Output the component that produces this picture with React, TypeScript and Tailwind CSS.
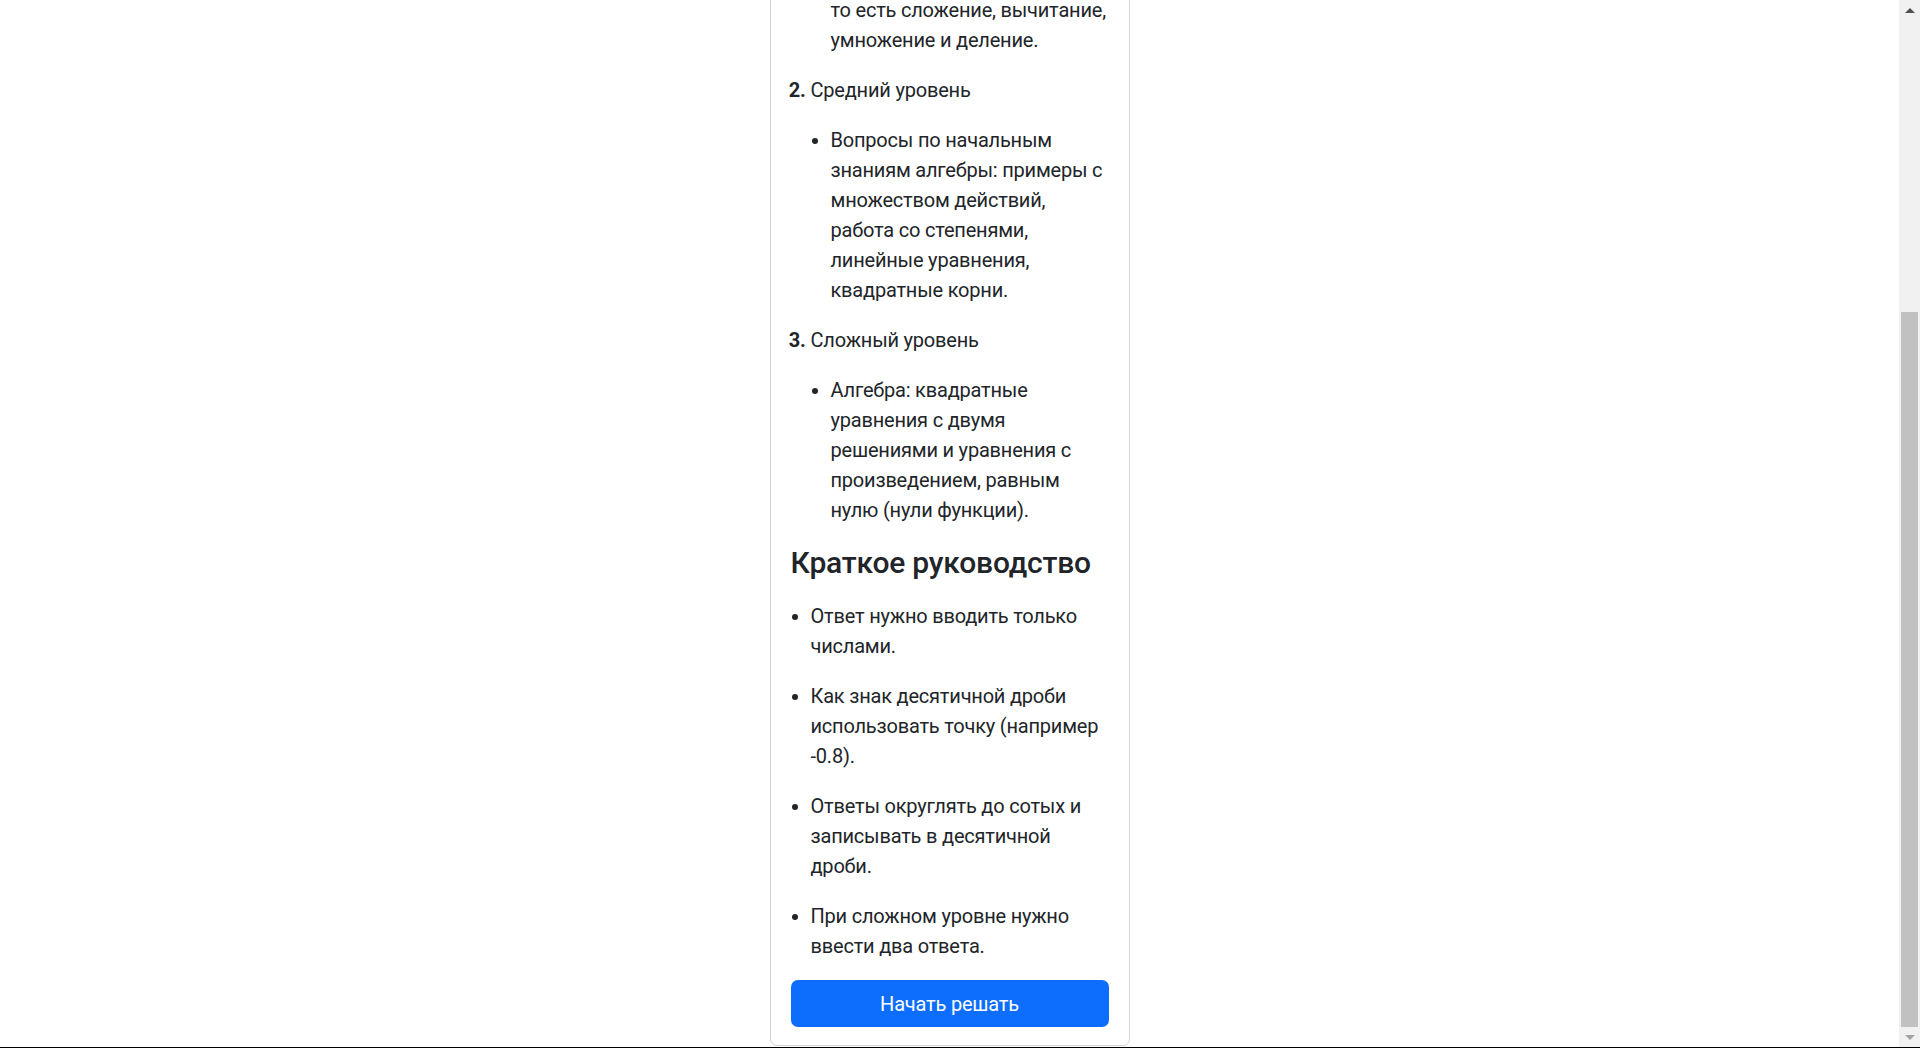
import React from 'react';

// Levels list shown in the guide card
const levels = [
  {
    title: 'Простой уровень',
    text: (
      <>
        Вопросы по арифметике: простые примеры с четырьмя действиями,
        <br />
        то есть сложение, вычитание, умножение и деление.
      </>
    ),
  },
  {
    title: 'Средний уровень',
    text: 'Вопросы по начальным знаниям алгебры: примеры с множеством действий, работа со степенями, линейные уравнения, квадратные корни.',
  },
  {
    title: 'Сложный уровень',
    text: 'Алгебра: квадратные уравнения с двумя решениями и уравнения с произведением, равным нулю (нули функции).',
  },
];

const rules = [
  'Ответ нужно вводить только числами.',
  'Как знак десятичной дроби использовать точку (например -0.8).',
  'Ответы округлять до сотых и записывать в десятичной дроби.',
  'При сложном уровне нужно ввести два ответа.',
];

const Scrollbar: React.FC = () => (
  <div className="flex w-[21px] shrink-0 flex-col bg-[#f1f1f1]">
    <div className="flex h-[20px] items-center justify-center">
      <div className="h-0 w-0 border-x-[5px] border-b-[5px] border-x-transparent border-b-[#505050]" />
    </div>
    <div className="h-[292px]" />
    <div className="mx-[2px] flex-1 bg-[#c1c1c1]" />
    <div className="flex h-[20px] items-center justify-center">
      <div className="h-0 w-0 border-x-[5px] border-t-[5px] border-x-transparent border-t-[#a3a3a3]" />
    </div>
  </div>
);

const App: React.FC = () => {
  return (
    <div className="flex h-[1048px] flex-col overflow-hidden bg-white font-['Segoe_UI',Roboto,sans-serif] text-[20px] leading-[30px] tracking-[-0.2px] text-[#212529]">
      <div className="flex min-h-0 flex-1">
        <main className="flex min-w-0 flex-1 flex-col justify-end overflow-hidden">
          <div className="mx-auto mb-px w-[360px] shrink-0 rounded-[7px] border border-[#d3d3d3] px-[20px] pb-[18px] pt-[20px]">
            <h4 className="mb-5 text-[30px] font-medium leading-[36px]">Уровни сложности</h4>
            <ol className="mb-5 list-decimal space-y-5 pl-[20px] marker:font-bold">
              {levels.map((level) => (
                <li key={level.title}>
                  {level.title}
                  <ul className="mt-5 list-disc pl-[20px]">
                    <li>{level.text}</li>
                  </ul>
                </li>
              ))}
            </ol>

            <h4 className="mb-5 text-[30px] font-medium leading-[36px]">Краткое руководство</h4>
            <ul className="mb-[19px] list-disc space-y-5 pl-[20px]">
              {rules.map((rule) => (
                <li key={rule}>{rule}</li>
              ))}
            </ul>

            <button className="h-[47px] w-full rounded-[7px] bg-[#0d6efd] text-[20px] text-white">
              Начать решать
            </button>
          </div>
        </main>
        <Scrollbar />
      </div>
      <div className="h-px bg-black" />
    </div>
  );
};

export default App;
